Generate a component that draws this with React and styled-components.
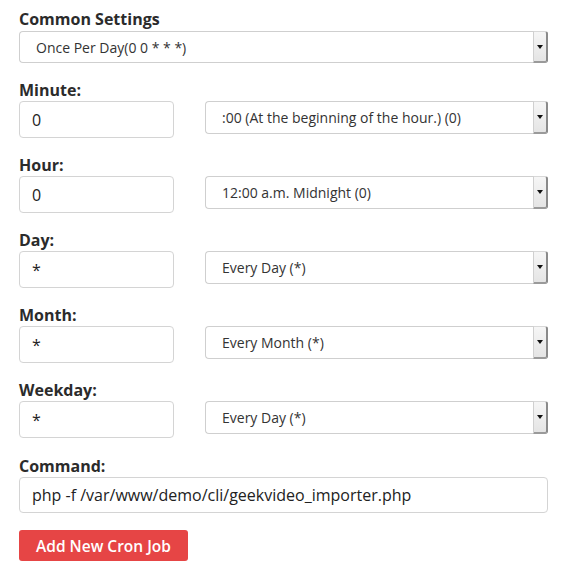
import styled, { createGlobalStyle } from 'styled-components';

const GlobalStyle = createGlobalStyle`
    body {
        margin: 0;
        background: #fff;
        font-family: "Open Sans", "Noto Sans", sans-serif;
        color: #333;
    }
`;

const Form = styled.form`
    display: flex;
    flex-direction: column;
    padding: 9px 0 0 19px;
    width: 529px;
`;

const Group = styled.div`
    display: flex;
    flex-direction: column;
    margin-bottom: ${p => p.$after || 17}px;
`;

const Label = styled.label`
    font-size: 16px;
    font-weight: 700;
    line-height: 20px;
    color: #2b2b2b;
    margin-bottom: ${p => p.$gap || 1}px;
`;

const Row = styled.div`
    display: flex;
    align-items: flex-start;
    gap: 31px;
`;

const TextInput = styled.div`
    box-sizing: border-box;
    width: ${p => p.$wide ? '529px' : '155px'};
    height: ${p => p.$h || 37}px;
    border: 1px solid #d4d4d4;
    border-radius: 4px;
    padding: 0 12px;
    display: flex;
    align-items: center;
    font-size: 16px;
    color: #222;
`;

const SelectBox = styled.div`
    box-sizing: border-box;
    flex: 1 1 auto;
    height: ${p => p.$h || 33}px;
    border: 1px solid #cfcfcf;
    border-right: none;
    border-radius: 4px;
    display: flex;
    align-items: stretch;
    font-size: 14px;
    color: #333;
`;

const SelectText = styled.span`
    flex: 1;
    display: flex;
    align-items: center;
    padding-left: 16px;
`;

const Arrow = styled.span`
    box-sizing: border-box;
    width: 15px;
    margin-top: -1px;
    margin-bottom: -1px;
    background: linear-gradient(#f6f6f6, #e4e4e4);
    border-left: 1px solid #d0d0d0;
    border-right: 2px solid #8a8a8a;
    border-bottom: 2px solid #9a9a9a;
    border-top: 1px solid #d8d8d8;
    border-radius: 0 3px 3px 0;
    display: flex;
    align-items: center;
    justify-content: center;

    &::after {
        content: '';
        border-left: 3px solid transparent;
        border-right: 3px solid transparent;
        border-top: 4px solid #111;
    }
`;

const Button = styled.button`
    align-self: flex-start;
    width: 169px;
    height: 31px;
    background: #e64545;
    color: #fff;
    border: none;
    border-radius: 3px;
    font-family: "Open Sans", sans-serif;
    font-size: 15.5px;
    font-weight: 600;
    padding: 0;
`;

const Select = ({ children, h }) => (
    <SelectBox $h={h}>
        <SelectText>{children}</SelectText>
        <Arrow />
    </SelectBox>
);

const fields = [
    { label: 'Minute:', value: '0', option: ':00 (At the beginning of the hour.) (0)' },
    { label: 'Hour:', value: '0', option: '12:00 a.m. Midnight (0)' },
    { label: 'Day:', value: '*', option: 'Every Day (*)' },
    { label: 'Month:', value: '*', option: 'Every Month (*)' },
    { label: 'Weekday:', value: '*', option: 'Every Day (*)' },
];

export default function App() {
    return <>
        <GlobalStyle />
        <Form onSubmit={e => e.preventDefault()}>
            <Group>
                <Label $gap={2}>Common Settings</Label>
                <Select h={32}>Once Per Day(0 0 * * *)</Select>
            </Group>
            {fields.map((f, i) => (
                <Group key={f.label} $after={i === fields.length - 1 ? 18 : 17}>
                    <Label>{f.label}</Label>
                    <Row>
                        <TextInput>{f.value}</TextInput>
                        <Select>{f.option}</Select>
                    </Row>
                </Group>
            ))}
            <Group>
                <Label>Command:</Label>
                <TextInput $wide $h={36}>php -f /var/www/demo/cli/geekvideo_importer.php</TextInput>
            </Group>
            <Button type="submit">Add New Cron Job</Button>
        </Form>
    </>;
}
